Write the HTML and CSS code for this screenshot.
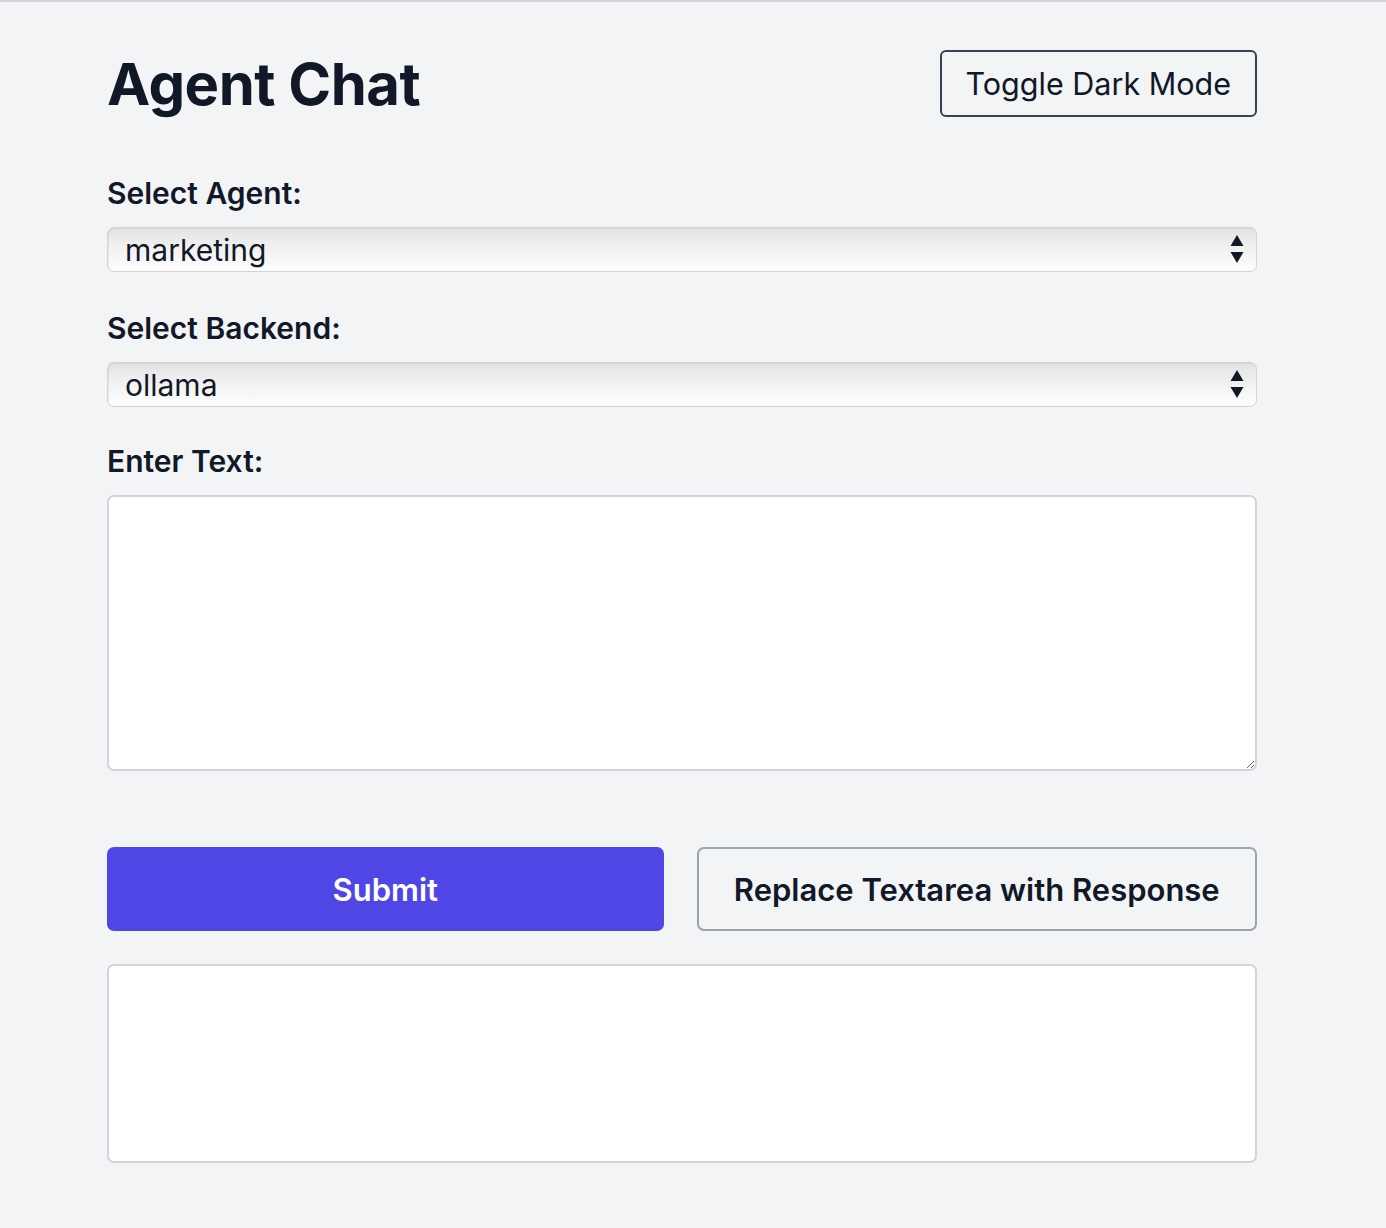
FILE: index.html
```html
<!DOCTYPE html>
<html lang="en">
<head>
<meta charset="utf-8">
<title>Agent Chat</title>
<link rel="stylesheet" href="styles.css">
</head>
<body>
<main class="page">
  <header class="header">
    <h1 class="title">Agent Chat</h1>
    <button class="btn-toggle" type="button">Toggle Dark Mode</button>
  </header>

  <div class="field">
    <label class="label" for="agent">Select Agent:</label>
    <div class="select-wrap">
      <select id="agent" class="select"><option>marketing</option></select>
      <svg class="arrows" width="14" height="30" viewBox="0 0 14 30" aria-hidden="true"><path d="M7 1 L13.5 12 L0.5 12 Z M0.5 18 L13.5 18 L7 29 Z" fill="#111827"/></svg>
    </div>
  </div>

  <div class="field">
    <label class="label" for="backend">Select Backend:</label>
    <div class="select-wrap">
      <select id="backend" class="select"><option>ollama</option></select>
      <svg class="arrows" width="14" height="30" viewBox="0 0 14 30" aria-hidden="true"><path d="M7 1 L13.5 12 L0.5 12 Z M0.5 18 L13.5 18 L7 29 Z" fill="#111827"/></svg>
    </div>
  </div>

  <div class="field field-text">
    <label class="label" for="text">Enter Text:</label>
    <textarea id="text" class="textarea"></textarea>
  </div>

  <div class="actions">
    <button class="btn-submit" type="button">Submit</button>
    <button class="btn-replace" type="button">Replace Textarea with Response</button>
  </div>

  <div class="output"></div>
</main>
</body>
</html>
```
FILE: styles.css
```css
* { box-sizing: border-box; }
html, body { margin: 0; padding: 0; }
body {
  background: #f3f4f6;
  border-top: 2px solid #d4d5d9;
  font-family: Inter, "Liberation Sans", sans-serif;
  color: #111827;
  min-height: 1228px;
}
.page {
  width: 1150px;
  margin-left: 107px;
  padding-top: 48px;
}
.header {
  display: flex;
  justify-content: space-between;
  align-items: center;
}
.title {
  margin: 0;
  font-size: 58px;
  font-weight: 700;
  letter-spacing: -0.5px;
  line-height: 1;
}
.btn-toggle {
  font-family: inherit;
  font-size: 30.5px;
  color: #111827;
  background: transparent;
  border: 2px solid #374151;
  border-radius: 6px;
  height: 67px;
  padding: 0 24px;
}
.field { margin-top: 54px; }
.field + .field { margin-top: 34px; }
.field + .field-text { margin-top: 32px; }
.label {
  display: block;
  font-size: 30px;
  font-weight: 600;
  line-height: 45px;
  margin-bottom: 11px;
}
.select-wrap {
  position: relative;
}
.select {
  appearance: none;
  -webkit-appearance: none;
  display: block;
  width: 100%;
  height: 45px;
  font-family: inherit;
  font-size: 30px;
  color: #111827;
  padding: 0 0 0 17px;
  border: 1px solid #d3d3d5;
  border-radius: 7px;
  background: linear-gradient(#e3e3e3 0%, #f1f1f1 45%, #fdfdfd 100%);
  box-shadow: inset 1px 1px 1px rgba(0,0,0,0.06);
}
.arrows {
  position: absolute;
  right: 13px;
  top: 7px;
}
.textarea {
  display: block;
  width: 100%;
  height: 276px;
  resize: vertical;
  background: #fff;
  border: 2px solid #d1d5db;
  border-radius: 7px;
  font-family: inherit;
  font-size: 30px;
}
.actions {
  display: flex;
  gap: 33px;
  margin-top: 76px;
}
.btn-submit, .btn-replace {
  flex: 1;
  height: 84px;
  border-radius: 7px;
  font-family: inherit;
  font-size: 31px;
  font-weight: 600;
}
.btn-submit {
  background: #4f46e5;
  color: #fff;
  border: none;
}
.btn-replace {
  background: transparent;
  color: #111827;
  border: 2px solid #9ca3af;
}
.output {
  margin-top: 33px;
  height: 199px;
  background: #fff;
  border: 2px solid #d1d5db;
  border-radius: 7px;
}
```
